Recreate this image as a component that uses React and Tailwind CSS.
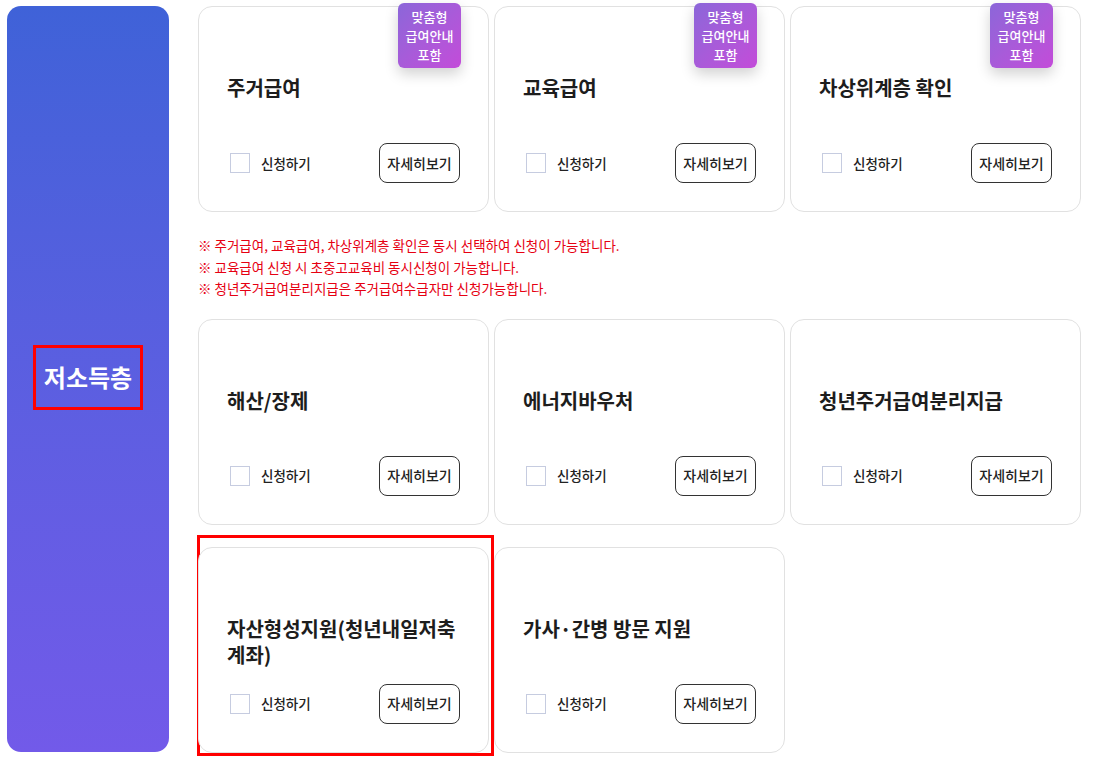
import React from "react";

const rowOne = [
  { id: "housing", title: "주거급여", badge: true },
  { id: "education", title: "교육급여", badge: true },
  { id: "nextpoor", title: "차상위계층 확인", badge: true },
];

const rowTwo = [
  { id: "birth", title: "해산/장제" },
  { id: "energy", title: "에너지바우처" },
  { id: "youthhousing", title: "청년주거급여분리지급" },
  { id: "asset", title: "자산형성지원(청년내일저축계좌)", marked: true },
  { id: "care", title: "가사·간병 방문 지원" },
];

const notes = [
  "※ 주거급여, 교육급여, 차상위계층 확인은 동시 선택하여 신청이 가능합니다.",
  "※ 교육급여 신청 시 초중고교육비 동시신청이 가능합니다.",
  "※ 청년주거급여분리지급은 주거급여수급자만 신청가능합니다.",
];

const Badge = () => (
  <div className="absolute -top-[4px] right-[27px] w-[63px] h-[65px] rounded-[6px] bg-gradient-to-br from-[#8b66d9] to-[#c34bd9] shadow-[0_6px_14px_rgba(0,0,0,0.18)] flex flex-col items-center justify-center text-white text-[13px] leading-[19px] font-medium">
    <span>맞춤형</span>
    <span>급여안내</span>
    <span>포함</span>
  </div>
);

const ServiceCard = ({ item }) => (
  <div className="relative">
    {item.marked && (
      <div className="absolute -top-[12px] -left-[1px] -right-[5px] -bottom-[3px] border-[3px] border-[#ff0000] pointer-events-none" />
    )}
    <div className="relative h-[206px] bg-white border border-[#e1e1e1] rounded-[14px] flex flex-col pt-[68px] pl-[28px] pr-[28px] pb-[28px]">
      {item.badge && <Badge />}
      <h3 className="text-[20px] leading-[26px] font-bold text-[#1d1d1d]">
        {item.title}
      </h3>
      <div className="mt-auto flex items-center justify-between">
        <label className="flex items-center gap-[11px] pl-[3px]">
          <span className="w-[20px] h-[20px] border border-[#c6cce0] bg-white" />
          <span className="text-[13.5px] font-medium text-[#222]">신청하기</span>
        </label>
        <button className="w-[81px] h-[40px] border border-[#333] rounded-[8px] bg-white text-[14px] font-medium text-[#222]">
          자세히보기
        </button>
      </div>
    </div>
  </div>
);

export default function App() {
  return (
    <div
      className="w-[1095px] h-[761px] bg-white flex pt-[6px] pb-[9px] pl-[7px] pr-[14px] gap-[29px]"
      style={{ fontFamily: '"Noto Sans CJK KR", "Noto Sans", sans-serif' }}
    >
      <aside className="w-[162px] h-[746px] rounded-[14px] bg-gradient-to-b from-[#3f62d8] to-[#725ae9] flex items-center justify-center">
        <div className="w-[110px] h-[65px] border-[3px] border-[#ff0000] flex items-center justify-center -mt-[4px]">
          <span className="text-white text-[24px] font-bold">저소득층</span>
        </div>
      </aside>

      <main className="flex-1 flex flex-col">
        <div className="grid grid-cols-3 gap-[5px]">
          {rowOne.map((item) => (
            <ServiceCard key={item.id} item={item} />
          ))}
        </div>

        <ul className="mt-[23px] mb-[19px] text-[#e60012] text-[13.5px] leading-[21.5px]">
          {notes.map((n) => (
            <li key={n}>{n}</li>
          ))}
        </ul>

        <div className="grid grid-cols-3 gap-x-[5px] gap-y-[22px]">
          {rowTwo.map((item) => (
            <ServiceCard key={item.id} item={item} />
          ))}
        </div>
      </main>
    </div>
  );
}
